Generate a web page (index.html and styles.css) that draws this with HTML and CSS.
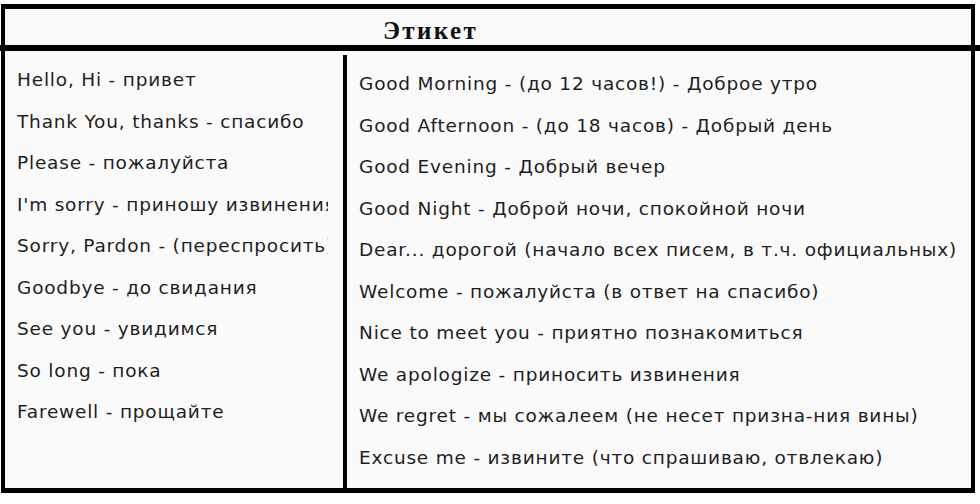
FILE: index.html
```html
<!DOCTYPE html>
<html lang="ru">
<head>
<meta charset="utf-8">
<title>Этикет</title>
<link rel="stylesheet" href="styles.css">
</head>
<body>
<div class="sheet">
  <div class="head">Этикет</div>
  <div class="body">
    <div class="col col-left">
      <div class="line">Hello, Hi - привет</div>
      <div class="line">Thank You, thanks - спасибо</div>
      <div class="line">Please - пожалуйста</div>
      <div class="line">I'm sorry - приношу извинения</div>
      <div class="line">Sorry, Pardon - (переспросить)</div>
      <div class="line">Goodbye - до свидания</div>
      <div class="line">See you - увидимся</div>
      <div class="line">So long - пока</div>
      <div class="line">Farewell - прощайте</div>
    </div>
    <div class="col col-right">
      <div class="line">Good Morning - (до 12 часов!) - Доброе утро</div>
      <div class="line">Good Afternoon - (до 18 часов) - Добрый день</div>
      <div class="line">Good Evening - Добрый вечер</div>
      <div class="line">Good Night - Доброй ночи, спокойной ночи</div>
      <div class="line">Dear... дорогой (начало всех писем, в т.ч. официальных)</div>
      <div class="line">Welcome - пожалуйста (в ответ на спасибо)</div>
      <div class="line">Nice to meet you - приятно познакомиться</div>
      <div class="line">We apologize - приносить извинения</div>
      <div class="line">We regret - мы сожалеем (не несет призна-ния вины)</div>
      <div class="line">Excuse me - извините (что спрашиваю, отвлекаю)</div>
    </div>
  </div>
</div>
</body>
</html>
```

FILE: styles.css
```css
html, body {
  margin: 0;
  padding: 0;
  background: #ffffff;
}
body {
  width: 980px;
  height: 504px;
  overflow: hidden;
}
.sheet {
  margin: 4px 5px 0 1px;
  width: 966px;
  background: #fafafa;
  border-left: 4px solid #000;
  border-right: 4px solid #000;
  border-top: 5px solid #000;
  border-bottom: 5px solid #000;
}
.head {
  height: 42px;
  box-sizing: border-box;
  margin-left: -5px;
  margin-right: -9px;
  padding-left: 383px;
  padding-top: 9px;
  font-family: "Liberation Serif", "Times New Roman", serif;
  font-weight: bold;
  font-size: 25px;
  letter-spacing: 2.4px;
  line-height: 26px;
  color: #111;
  border-bottom: 6px solid #000;
}
.body {
  display: flex;
  height: 437px;
}
.col {
  box-sizing: border-box;
  font-family: "DejaVu Sans", Verdana, sans-serif;
  font-size: 18.5px;
  letter-spacing: 0.8px;
  line-height: 41.5px;
  color: #1e1e1e;
  white-space: nowrap;
  overflow: hidden;
}
.col-left {
  width: 338px;
  padding: 8px 0 0 12px;
}
.col-left .line {
  width: 311px;
  overflow: hidden;
}
.col-right {
  flex: 1;
  margin-top: 4px;
  border-left: 4px solid #000;
  padding: 8px 0 0 12px;
}
.line {
  height: 41.5px;
}
```
